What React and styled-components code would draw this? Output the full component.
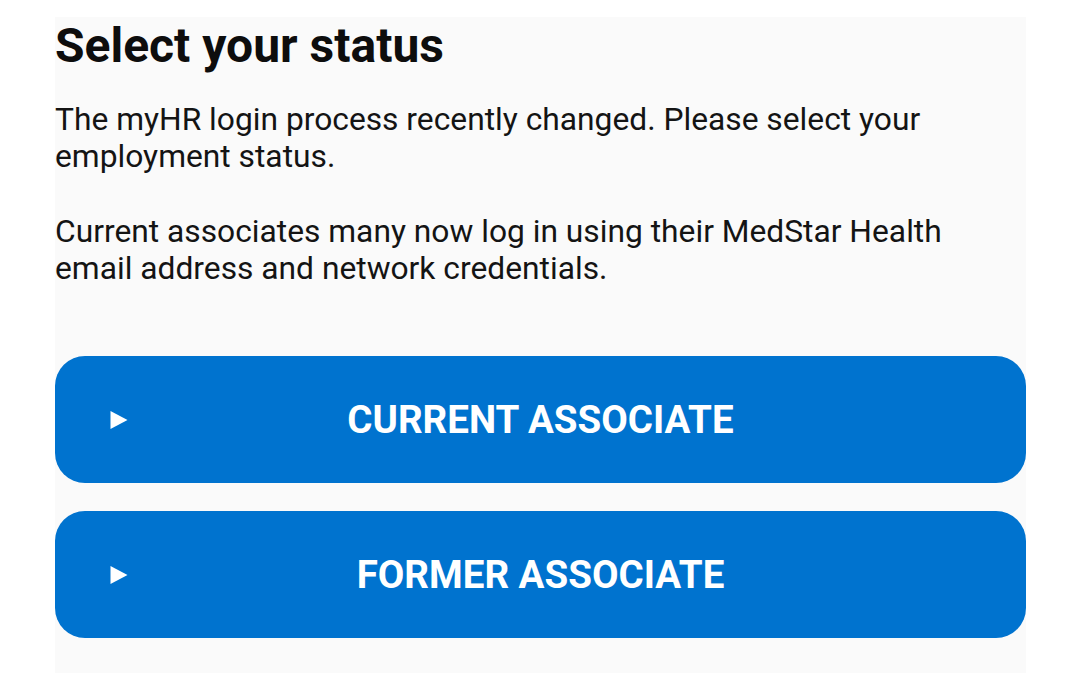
import styled, {createGlobalStyle} from 'styled-components';

const Global = createGlobalStyle`
  html, body {
    margin: 0;
    padding: 0;
    background: #ffffff;
  }
  body {
    font-family: Roboto, "Liberation Sans", Arial, sans-serif;
    color: #111111;
  }
`;

const Page = styled.div`
  width: 1080px;
  height: 673px;
  overflow: hidden;
  padding-top: 17px;
  box-sizing: border-box;
`;

const Panel = styled.main`
  margin-left: 55px;
  width: 971px;
  height: 656px;
  background: #fafafa;
`;

const Title = styled.h1`
  margin: 0;
  padding-top: 1px;
  font-size: 48px;
  line-height: 56px;
  font-weight: 700;
  color: #0d0d0d;
`;

const Text = styled.p`
  margin: ${props => (props.first ? '28px' : '39px')} 0 0;
  max-width: 940px;
  font-size: 31.75px;
  line-height: 36.5px;
  font-weight: 400;
  color: #141414;
`;

const Buttons = styled.div`
  margin-top: 69px;
  display: flex;
  flex-direction: column;
  gap: 28px;
`;

const Btn = styled.button`
  position: relative;
  display: flex;
  align-items: center;
  justify-content: center;
  width: 100%;
  height: 127px;
  padding: 0;
  border: 0;
  border-radius: 30px;
  background: #0073cf;
  color: #ffffff;
  font-family: Roboto, "Liberation Sans", Arial, sans-serif;
  font-size: 38.5px;
  font-weight: 700;
  cursor: pointer;
`;

const Arrow = styled.svg`
  position: absolute;
  left: 54px;
  top: 50%;
  transform: translateY(-50%);
`;

function StatusButton({label}) {
  return (
    <Btn>
      <Arrow width="20" height="22" viewBox="0 0 20 22">
        <path d="M1.5 2 L18.5 11 L1.5 20 Z" fill="#ffffff" />
      </Arrow>
      {label}
    </Btn>
  );
}

export default function App() {
  return (
    <Page>
      <Global />
      <Panel>
        <Title>Select your status</Title>
        <Text first>
          The myHR login process recently changed. Please select your employment status.
        </Text>
        <Text>
          Current associates many now log in using their MedStar Health email address and network
          credentials.
        </Text>
        <Buttons>
          <StatusButton label="CURRENT ASSOCIATE" />
          <StatusButton label="FORMER ASSOCIATE" />
        </Buttons>
      </Panel>
    </Page>
  );
}
